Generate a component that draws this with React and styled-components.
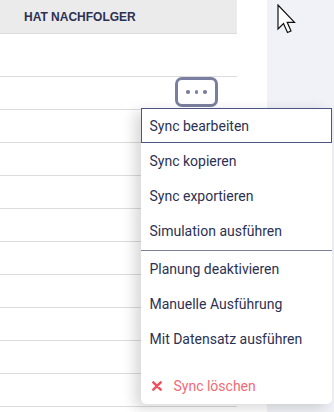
import React from "react";
import styled, { createGlobalStyle } from "styled-components";

const navy = "#2c3152";

const GlobalStyle = createGlobalStyle`
  html, body {
    margin: 0;
    padding: 0;
    background: #ffffff;
    overflow: hidden;
  }
  body {
    font-family: Roboto, "Liberation Sans", sans-serif;
  }
`;

const Page = styled.div`
  position: relative;
  display: flex;
  width: 334px;
  height: 412px;
  overflow: hidden;
`;

const Table = styled.div`
  width: 237px;
  flex-shrink: 0;
  display: flex;
  flex-direction: column;
`;

const Gutter = styled.div`
  width: 30px;
  flex-shrink: 0;
  background: #ffffff;
`;

const SidePanel = styled.div`
  flex: 1;
  background: #f1f2f7;
  position: relative;
`;

const Header = styled.div`
  height: 33px;
  flex-shrink: 0;
  display: flex;
  align-items: center;
  padding-left: 24px;
  background: #ebebeb;
  border-bottom: 1px solid #dcdcdc;
  font-family: "Liberation Sans", Arial, sans-serif;
  font-weight: 700;
  font-size: 12px;
  color: ${navy};
`;

const Row = styled.div`
  height: ${({ tall }) => (tall ? "42px" : "32px")};
  flex-shrink: 0;
  display: flex;
  align-items: flex-start;
  justify-content: flex-end;
  padding-right: 19px;
  border-bottom: 1px solid #dcdcdc;
`;

const DotsButton = styled.button`
  width: 43px;
  height: 30px;
  box-sizing: border-box;
  border: 3px solid #7a7f9f;
  border-radius: 7px;
  background: #ffffff;
  display: flex;
  align-items: center;
  justify-content: center;
  gap: 5px;
  padding: 0;
`;

const Dot = styled.span`
  width: 3.5px;
  height: 3.5px;
  border-radius: 50%;
  background: #7a7f9f;
`;

const Cursor = styled.svg`
  position: absolute;
  left: 10px;
  top: 4px;
`;

const Menu = styled.div`
  position: absolute;
  left: 141px;
  top: 108px;
  width: 191px;
  box-sizing: border-box;
  padding-bottom: 1px;
  background: #ffffff;
  border-radius: 0 0 5px 5px;
  box-shadow: -6px 4px 14px rgba(0, 0, 0, 0.16);
  display: flex;
  flex-direction: column;
`;

const Item = styled.div`
  height: 35px;
  box-sizing: border-box;
  display: flex;
  align-items: center;
  gap: 12px;
  padding-left: ${({ danger }) => (danger ? "9.5px" : "7.5px")};
  font-size: 14px;
  color: ${({ danger }) => (danger ? "#f26b74" : navy)};
  border: 1.5px solid
    ${({ focused }) => (focused ? "#4c5385" : "transparent")};
`;

const Divider = styled.div`
  height: 1px;
  margin-top: 2px;
  background: #7b809b;
`;

const Spacer = styled.div`
  height: 12px;
`;

const items = [
  "Sync bearbeiten",
  "Sync kopieren",
  "Sync exportieren",
  "Simulation ausführen",
];

const items2 = [
  "Planung deaktivieren",
  "Manuelle Ausführung",
  "Mit Datensatz ausführen",
];

const App = () => {
  return (
    <Page>
      <GlobalStyle />
      <Table>
        <Header>HAT NACHFOLGER</Header>
        <Row tall />
        <Row>
          <DotsButton>
            <Dot />
            <Dot />
            <Dot />
          </DotsButton>
        </Row>
        {Array.from({ length: 10 }).map((_, i) => (
          <Row key={i} />
        ))}
      </Table>
      <Gutter />
      <SidePanel>
        <Cursor width="20" height="31" viewBox="0 0 20 31">
          <path
            d="M1 1 L1 25 L6.5 19.5 L10.5 28.5 L14 27 L10.2 18.3 L17.5 18.3 Z"
            fill="#ffffff"
            stroke="#111111"
            strokeWidth="1.2"
            strokeLinejoin="miter"
          />
        </Cursor>
      </SidePanel>

      <Menu>
        {items.map((label, i) => (
          <Item key={label} focused={i === 0}>
            {label}
          </Item>
        ))}
        <Divider />
        {items2.map((label) => (
          <Item key={label}>{label}</Item>
        ))}
        <Spacer />
        <Item danger>
          <svg width="10" height="10" viewBox="0 0 10 10">
            <path
              d="M1.3 1.3 L8.7 8.7 M8.7 1.3 L1.3 8.7"
              stroke="#f0505c"
              strokeWidth="2.4"
              strokeLinecap="round"
            />
          </svg>
          Sync löschen
        </Item>
      </Menu>
    </Page>
  );
};

export default App;
